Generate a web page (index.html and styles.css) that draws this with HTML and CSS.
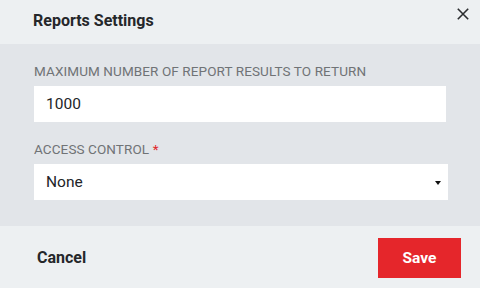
FILE: index.html
```html
<!DOCTYPE html>
<html>
<head>
<meta charset="utf-8">
<link rel="stylesheet" href="styles.css">
</head>
<body>
<div class="dialog">
  <div class="header">
    <div class="title">Reports Settings</div>
    <button class="close" aria-label="Close">
      <svg width="12" height="12" viewBox="0 0 12 12"><path d="M0.8 0.8 L11.2 11.2 M11.2 0.8 L0.8 11.2" stroke="#2b2d30" stroke-width="1.6" fill="none"/></svg>
    </button>
  </div>
  <div class="content">
    <label class="label">MAXIMUM NUMBER OF REPORT RESULTS TO RETURN</label>
    <div class="input">1000</div>
    <label class="label second">ACCESS CONTROL <span class="req">*</span></label>
    <div class="select"><span>None</span><span class="caret"></span></div>
  </div>
  <div class="footer">
    <div class="cancel">Cancel</div>
    <div class="save">Save</div>
  </div>
</div>
</body>
</html>
```
FILE: styles.css
```css
html, body { margin: 0; padding: 0; }
body { font-family: Roboto, "Liberation Sans", sans-serif; width: 480px; height: 288px; overflow: hidden; }
.dialog { width: 480px; height: 288px; display: flex; flex-direction: column; }
.header { height: 44px; background: #edf0f2; display: flex; align-items: flex-start; justify-content: space-between; box-sizing: border-box; padding-left: 33px; }
.title { font-size: 16px; font-weight: 700; color: #25272a; line-height: 20px; margin-top: 11px; }
.close { border: 0; background: none; padding: 0; margin: 8px 11px 0 0; width: 12px; height: 12px; display: block; }
.close svg { display: block; }
.content { background: #e2e5e9; height: 182px; box-sizing: border-box; padding: 19px 32px 0 34px; display: flex; flex-direction: column; align-items: flex-start; }
.label { font-size: 13.5px; letter-spacing: 0.1px; line-height: 16px; color: #707376; display: block; }
.label.second { margin-top: 19px; }
.req { color: #e0262b; }
.input { margin-top: 7px; width: 412px; height: 36px; background: #fff; box-sizing: border-box; padding-left: 12px; font-size: 15.5px; line-height: 36px; color: #222428; }
.select { margin-top: 7px; width: 414px; height: 36px; background: #fff; box-sizing: border-box; padding: 0 7px 0 12px; font-size: 15.5px; line-height: 36px; color: #222428; display: flex; justify-content: space-between; align-items: center; }
.caret { width: 0; height: 0; border-left: 3.5px solid transparent; border-right: 3.5px solid transparent; border-top: 4px solid #111; margin-top: 2px; }
.footer { flex: 1; background: #edf0f2; display: flex; justify-content: space-between; align-items: center; padding: 0 19px 0 37px; }
.cancel { font-size: 16px; font-weight: 700; color: #25272a; line-height: 20px; margin-top: 2px; }
.save { width: 83px; height: 40px; background: #e5262b; color: #fff; font-size: 15.5px; font-weight: 700; display: flex; align-items: center; justify-content: center; margin-top: 2px; }
```
